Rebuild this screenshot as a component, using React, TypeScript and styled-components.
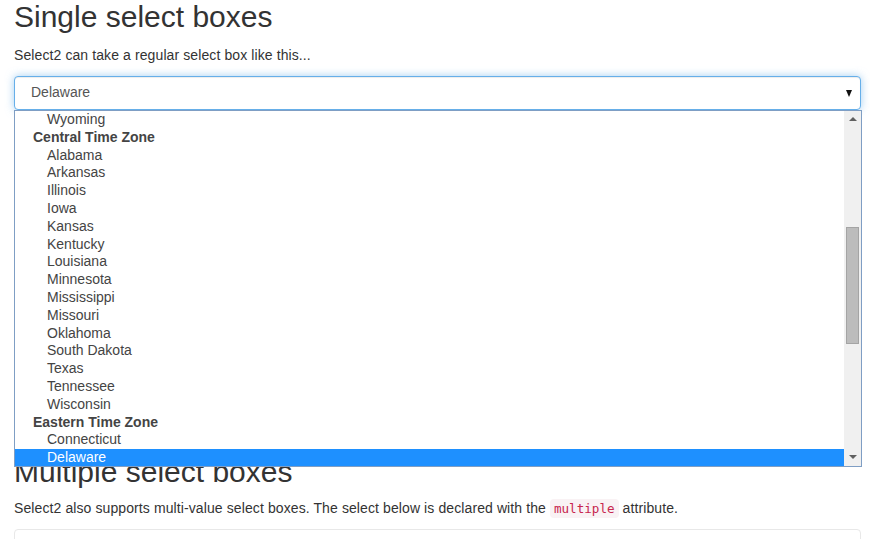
import React from 'react';
import styled, { createGlobalStyle } from 'styled-components';

const GlobalStyle = createGlobalStyle`
    html, body {
        margin: 0;
        padding: 0;
        background: #fff;
    }
    body {
        font-family: "Liberation Sans", Arial, Helvetica, sans-serif;
        font-size: 14px;
        line-height: 1.42857;
        color: #333;
    }
`

const Page = styled.div`
    padding: 0 9px 0 14px;
    width: 847px;
    height: 539px;
    overflow: hidden;
`

const Heading = styled.h2<{ $top: number; $bottom: number }>`
    font-family: "Liberation Sans", Arial, sans-serif;
    font-weight: 500;
    font-size: 30px;
    line-height: 1.1;
    color: #333;
    margin: ${(p) => p.$top}px 0 ${(p) => p.$bottom}px;
`

const Lead = styled.p`
    margin: 0 0 10px;
    font-size: 14px;
    letter-spacing: 0.1px;
`

const Code = styled.code`
    font-family: "DejaVu Sans Mono", "Liberation Mono", monospace;
    font-size: 90%;
    letter-spacing: 0;
    color: #c7254e;
    background: #f9f2f4;
    padding: 2px 4px;
    border-radius: 4px;
`

const SelectWrap = styled.div`
    position: relative;
    z-index: 5;
`

const SelectBox = styled.div`
    display: flex;
    align-items: center;
    justify-content: space-between;
    height: 34px;
    box-sizing: border-box;
    padding: 0 8px 0 16px;
    border: 1px solid #66afe9;
    border-radius: 4px;
    box-shadow: inset 0 1px 1px rgba(0,0,0,.075), 0 0 8px rgba(102,175,233,.6);
    font-size: 14px;
    color: #555;
    background: #fff;
`

const Caret = styled.span`
    width: 0;
    height: 0;
    border-left: 3.5px solid transparent;
    border-right: 3.5px solid transparent;
    border-top: 7px solid #111;
    margin-top: 1px;
`

const ListBox = styled.div`
    position: absolute;
    top: 100%;
    left: 0;
    width: 848px;
    height: 357px;
    box-sizing: border-box;
    border: 1px solid #7f9ec4;
    background: #fff;
    display: flex;
    overflow: hidden;
`

const Rows = styled.div`
    flex: 1;
    display: flex;
    flex-direction: column;
`

const Row = styled.div<{ $group?: boolean; $active?: boolean }>`
    height: 17.8px;
    line-height: 17.8px;
    flex-shrink: 0;
    font-family: "Liberation Sans", Arial, sans-serif;
    font-size: 14px;
    padding-left: ${(p) => (p.$group ? '18px' : '32px')};
    font-weight: ${(p) => (p.$group ? 700 : 400)};
    color: ${(p) => (p.$active ? '#fff' : '#444')};
    background: ${(p) => (p.$active ? '#1e90ff' : 'transparent')};
`

const ScrollTrack = styled.div`
    width: 17px;
    background: #f0f0f0;
    display: flex;
    flex-direction: column;
    align-items: center;
`

const ScrollArrow = styled.div<{ $down?: boolean }>`
    height: 17px;
    display: flex;
    align-items: center;
    justify-content: center;
    &::after {
        content: '';
        border-left: 4px solid transparent;
        border-right: 4px solid transparent;
        ${(p) => (p.$down ? 'border-top: 4px solid #606060;' : 'border-bottom: 4px solid #606060;')}
    }
`

const Thumb = styled.div`
    width: 13px;
    height: 117px;
    margin-top: 99px;
    background: #bcbcbc;
    border: 1px solid #a4a4a4;
    box-sizing: border-box;
`

const Spacer = styled.div`
    flex: 1;
`

const Panel = styled.div`
    height: 40px;
    border: 1px solid #e8e8e8;
    border-radius: 4px;
    margin-top: 9px;
`

type Item = { label: string; group?: boolean; active?: boolean }

const items: Item[] = [
    { label: 'Wyoming' },
    { label: 'Central Time Zone', group: true },
    { label: 'Alabama' },
    { label: 'Arkansas' },
    { label: 'Illinois' },
    { label: 'Iowa' },
    { label: 'Kansas' },
    { label: 'Kentucky' },
    { label: 'Louisiana' },
    { label: 'Minnesota' },
    { label: 'Mississippi' },
    { label: 'Missouri' },
    { label: 'Oklahoma' },
    { label: 'South Dakota' },
    { label: 'Texas' },
    { label: 'Tennessee' },
    { label: 'Wisconsin' },
    { label: 'Eastern Time Zone', group: true },
    { label: 'Connecticut' },
    { label: 'Delaware', active: true },
]

export default function App() {
    return (
        <Page>
            <GlobalStyle />
            <Heading $top={0} $bottom={13}>Single select boxes</Heading>
            <Lead>Select2 can take a regular select box like this...</Lead>
            <SelectWrap>
                <SelectBox>
                    <span>Delaware</span>
                    <Caret />
                </SelectBox>
                <ListBox>
                    <Rows>
                        {items.map((it) => (
                            <Row key={it.label} $group={it.group} $active={it.active}>
                                {it.label}
                            </Row>
                        ))}
                    </Rows>
                    <ScrollTrack>
                        <ScrollArrow />
                        <Thumb />
                        <Spacer />
                        <ScrollArrow $down />
                    </ScrollTrack>
                </ListBox>
            </SelectWrap>
            <Heading $top={345} $bottom={11}>Multiple select boxes</Heading>
            <Lead>
                Select2 also supports multi-value select boxes. The select below is declared with the <Code>multiple</Code> attribute.
            </Lead>
            <Panel />
        </Page>
    )
}
